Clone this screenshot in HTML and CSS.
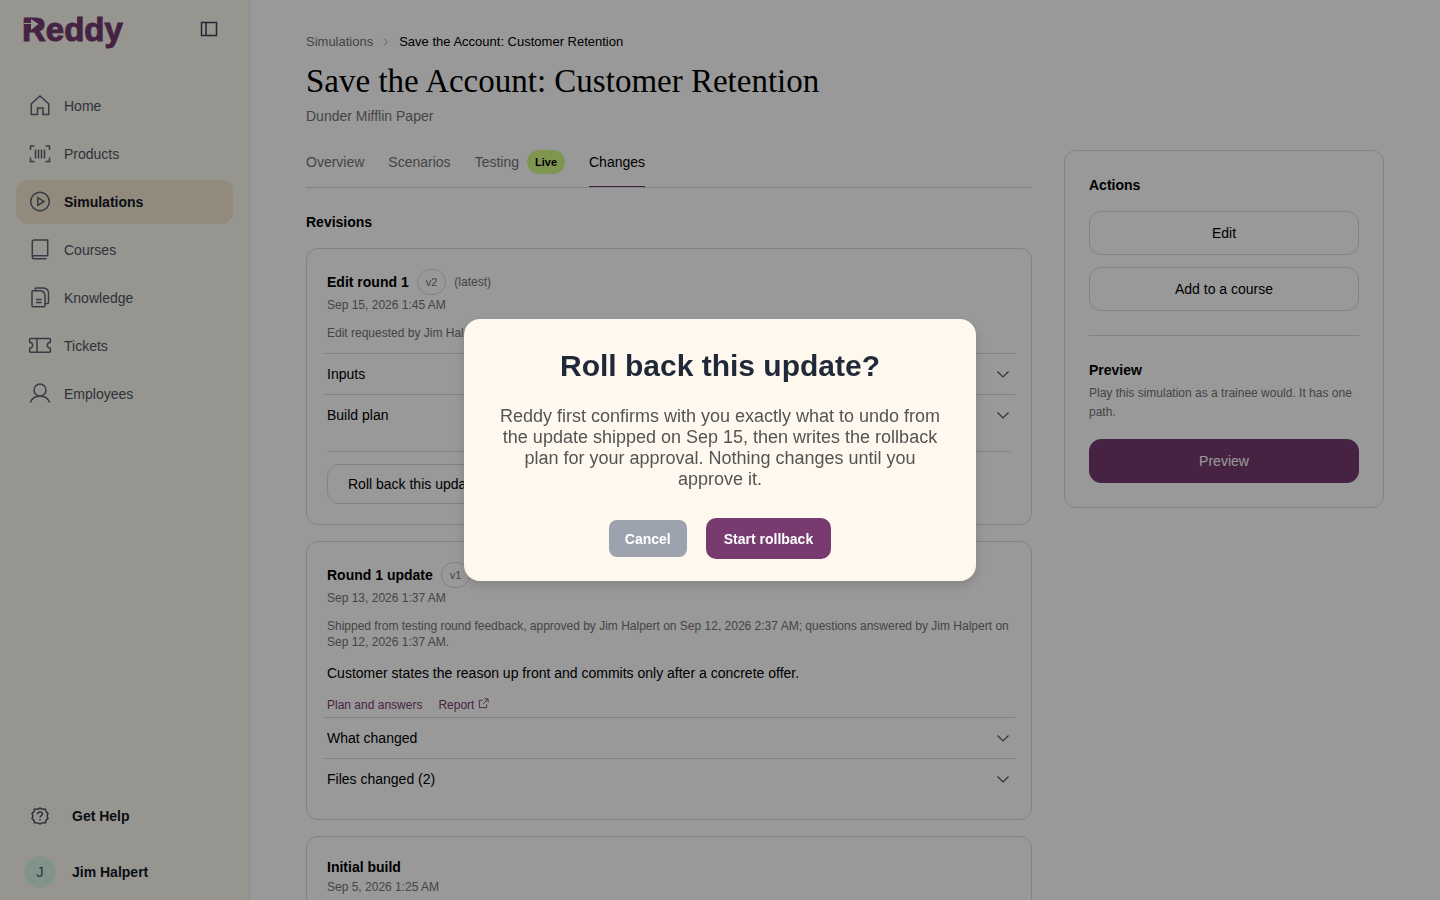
FILE: index.html
```
<!DOCTYPE html>
<html lang="en">
<head>
    <meta charset="UTF-8">
    <meta name="viewport" content="width=device-width, initial-scale=1.0">
    <title>Save the Account: Customer Retention - Reddy</title>
    <link rel="stylesheet" href="styles.css">
</head>
<body>

    <div class="app">
        <aside class="sidebar">
            <div class="sidebar-top">
                <a href="#" class="logo" aria-label="Reddy">
                    <svg width="110" height="44" viewBox="0 0 110 44">
                        <text class="logo-text" x="-2" y="29">Reddy</text>
                        <path class="logo-fill" d="M5 8h10v8H5z"/>
                        <path class="logo-cut" d="M0 11h7V7l7.500 5L7 18v-6H0z"/>
                    </svg>
                </a>
                <button class="collapse-btn" aria-label="Toggle sidebar">
                    <svg width="18" height="16" viewBox="0 0 18 16"><path d="M1.500 1.500h15v13h-15zM6 1.500v13"/></svg>
                </button>
            </div>

            <nav class="nav">
                <a href="#" class="nav-item">
                    <svg class="icon" viewBox="0 0 24 24"><path d="M3.300 9.800L12 2l8.700 7.800v10.700H15v-6.500H9.500v6.500H3.300z"/></svg>
                    Home
                </a>
                <a href="#" class="nav-item">
                    <svg class="icon" viewBox="0 0 24 24"><path d="M6.500 4h-4v4M17.500 4h4v4M6.500 19.500h-4v-4M17.500 19.500h4v-4M7.500 7.500v9M10.500 7.500v9M13.500 7.500v9M16.500 7.500v9"/></svg>
                    Products
                </a>
                <a href="#" class="nav-item active">
                    <svg class="icon" viewBox="0 0 24 24"><circle cx="12" cy="11.500" r="9.300"/><path d="M9.800 7.700v7.600l6.200-3.800z"/></svg>
                    Simulations
                </a>
                <a href="#" class="nav-item">
                    <svg class="icon" viewBox="0 0 24 24"><path d="M4.300 19v-15a2 2 0 0 1 2-2h13.400v15.700H5.800a1.500 1.500 0 0 0 0 3H18.500"/></svg>
                    Courses
                </a>
                <a href="#" class="nav-item">
                    <svg class="icon" viewBox="0 0 24 24"><path d="M4 5.700a1 1 0 0 1 1-1h7.500q4 .5 4.500 4.500v10.500a1 1 0 0 1-1 1H5a1 1 0 0 1-1-1zM7.300 4.500V3a1 1 0 0 1 1-1H15.500q4.500.5 5 4.500v10a1 1 0 0 1-1 1H17.200M8 13.500h5.500M8 16.500h5.500"/></svg>
                    Knowledge
                </a>
                <a href="#" class="nav-item">
                    <svg class="icon" viewBox="0 0 24 24"><path d="M2.500 4.500h19a.8.8 0 0 1 .8.8v3q-3 .7-3 3t3 3v3.200a.8.8 0 0 1-.8.800h-19a.8.8 0 0 1-.8-.800v-3.200q3-.7 3-3t-3-3v-3a.8.8 0 0 1 .8-.8zM9 4.500v13.800"/></svg>
                    Tickets
                </a>
                <a href="#" class="nav-item">
                    <svg class="icon" viewBox="0 0 24 24"><circle cx="12" cy="8" r="6"/><path d="M2.300 20.500c1.500-4 5-6.500 9.700-6.500s8.200 2.500 9.700 6.500"/></svg>
                    Employees
                </a>
            </nav>

            <div class="sidebar-bottom">
                <a href="#" class="bottom-item">
                    <span class="bottom-icon">
                        <svg width="18" height="18" viewBox="0 0 18 18"><path d="M9 1Q10.500 2.600 14.500 2.200Q14.300 4.800 17 6.500Q15.400 9 17 11.500Q14.300 13.200 14.500 15.800Q10.500 15.400 9 17Q7.500 15.400 3.500 15.800Q3.700 13.200 1 11.500Q2.600 9 1 6.500Q3.700 4.800 3.500 2.200Q7.500 2.600 9 1z"/><path d="M6.500 7.200c0-3 5-3 5-.2 0 1.700-2.500 1.700-2.500 3.500M9 12v1.500"/></svg>
                    </span>
                    Get Help
                </a>
                <a href="#" class="bottom-item">
                    <span class="avatar">J</span>
                    Jim Halpert
                </a>
            </div>
        </aside>

        <main class="main">
            <div class="breadcrumb">
                <a href="#">Simulations</a>
                <svg width="6" height="10" viewBox="0 0 6 10"><path d="M1 1.500L4.500 5 1 8.500"/></svg>
                <span>Save the Account: Customer Retention</span>
            </div>
            <h1>Save the Account: Customer Retention</h1>
            <p class="company">Dunder Mifflin Paper</p>

            <div class="columns">
                <div class="content">
                    <div class="tabs">
                        <a href="#" class="tab">Overview</a>
                        <a href="#" class="tab">Scenarios</a>
                        <a href="#" class="tab">Testing <span class="live">Live</span></a>
                        <a href="#" class="tab active">Changes</a>
                    </div>

                    <h2>Revisions</h2>

                    <div class="revisions">
                        <!-- Edit round 1 -->
                        <section class="card">
                            <div class="card-title">
                                <h3>Edit round 1</h3>
                                <span class="version">v2</span>
                                <span class="latest">(latest)</span>
                            </div>
                            <p class="date">Sep 15, 2026 1:45 AM</p>
                            <p class="note">Edit requested by Jim Halpert.</p>
                            <div class="rows">
                                <button class="row">Inputs <svg width="12" height="8" viewBox="0 0 12 8"><path d="M.5 1.500L6 7l5.500-5.500"/></svg></button>
                                <button class="row">Build plan <svg width="12" height="8" viewBox="0 0 12 8"><path d="M.5 1.500L6 7l5.500-5.500"/></svg></button>
                            </div>
                            <div class="card-footer">
                                <button class="btn btn-small">Roll back this update</button>
                            </div>
                        </section>

                        <!-- Round 1 update -->
                        <section class="card">
                            <div class="card-title">
                                <h3>Round 1 update</h3>
                                <span class="version">v1</span>
                            </div>
                            <p class="date">Sep 13, 2026 1:37 AM</p>
                            <p class="note">Shipped from testing round feedback, approved by Jim Halpert on Sep 12, 2026 2:37 AM; questions answered by Jim Halpert on Sep 12, 2026 1:37 AM.</p>
                            <p class="summary">Customer states the reason up front and commits only after a concrete offer.</p>
                            <div class="links">
                                <a href="#">Plan and answers</a>
                                <a href="#">Report <svg width="11" height="11" viewBox="0 0 12 12"><path d="M5 2.500H1.500v8h8V7M7 1h4v4M11 1L5.500 6.500"/></svg></a>
                            </div>
                            <div class="rows">
                                <button class="row">What changed <svg width="12" height="8" viewBox="0 0 12 8"><path d="M.5 1.500L6 7l5.500-5.500"/></svg></button>
                                <button class="row">Files changed (2) <svg width="12" height="8" viewBox="0 0 12 8"><path d="M.5 1.500L6 7l5.500-5.500"/></svg></button>
                            </div>
                        </section>

                        <!-- Initial build -->
                        <section class="card">
                            <div class="card-title">
                                <h3>Initial build</h3>
                            </div>
                            <p class="date">Sep 5, 2026 1:25 AM</p>
                        </section>
                    </div>
                </div>

                <aside class="panel">
                    <h2>Actions</h2>
                    <div class="panel-buttons">
                        <button class="btn">Edit</button>
                        <button class="btn">Add to a course</button>
                    </div>
                    <hr>
                    <h2>Preview</h2>
                    <p class="panel-text">Play this simulation as a trainee would. It has one path.</p>
                    <button class="btn btn-primary">Preview</button>
                </aside>
            </div>
        </main>
    </div>

    <div class="overlay">
        <div class="modal" role="dialog" aria-modal="true" aria-labelledby="modalTitle">
            <h2 class="modal-title" id="modalTitle">Roll back this update?</h2>
            <p class="modal-text">Reddy first confirms with you exactly what to undo from the update shipped on Sep 15, then writes the rollback plan for your approval. Nothing changes until you approve it.</p>
            <div class="modal-actions">
                <button class="modal-cancel">Cancel</button>
                <button class="modal-confirm">Start rollback</button>
            </div>
        </div>
    </div>

</body>
</html>
```

FILE: styles.css
```
* {
    box-sizing: border-box;
}
body {
    margin: 0;
    font-family: "Liberation Sans", Arial, sans-serif;
    font-size: 14px;
    line-height: 20px;
    color: #000;
    background-color: #fff;
    overflow: hidden;
}
h1, h2, h3, p {
    margin: 0;
}
h2, h3 {
    font-size: 14px;
    font-weight: bold;
}
a {
    color: inherit;
    text-decoration: none;
}
button {
    font: inherit;
    color: inherit;
    background: none;
    border: none;
    padding: 0;
    cursor: pointer;
}
svg {
    fill: none;
    stroke: currentColor;
    stroke-width: 1.5;
    flex-shrink: 0;
}
.app {
    display: flex;
    height: 100vh;
}

/* sidebar */
.sidebar {
    width: 250px;
    flex-shrink: 0;
    display: flex;
    flex-direction: column;
    background-color: #fbf8f1;
    border-right: 1px solid #e5e7eb;
}
.sidebar-top {
    display: flex;
    justify-content: space-between;
    align-items: flex-start;
    padding: 12px 31px 0 24px;
    height: 84px;
}
.logo svg {
    display: block;
    stroke: none;
    overflow: visible;
}
.logo-text {
    font-family: "Liberation Sans", Arial, sans-serif;
    font-size: 33px;
    font-weight: bold;
    fill: #773b70;
    stroke: #773b70;
    stroke-width: 1;
}
.logo-fill {
    fill: #773b70;
}
.logo-cut {
    fill: #fbf8f1;
}
.collapse-btn {
    display: flex;
    padding: 9px 0;
    color: #374151;
}
.nav {
    display: flex;
    flex-direction: column;
    gap: 4px;
    padding: 0 16px;
}
.nav-item {
    display: flex;
    align-items: center;
    gap: 12px;
    height: 44px;
    padding: 0 12px;
    border-radius: 12px;
    color: #4b5563;
}
.nav-item.active {
    background-color: #f3e6cf;
    color: #111827;
    font-weight: bold;
}
.icon {
    width: 24px;
    height: 24px;
    color: #5b6472;
}
.sidebar-bottom {
    display: flex;
    flex-direction: column;
    gap: 24px;
    margin-top: auto;
    padding: 0 24px 12px;
}
.bottom-item {
    display: flex;
    align-items: center;
    gap: 16px;
    height: 32px;
    color: #111827;
    font-weight: bold;
}
.bottom-icon,
.avatar {
    display: flex;
    align-items: center;
    justify-content: center;
    width: 32px;
    height: 32px;
    border-radius: 50%;
}
.bottom-icon {
    color: #4b5563;
}
.avatar {
    background-color: #d9f5ea;
    color: #3d6158;
    font-weight: normal;
}

/* main */
.main {
    flex: 1;
    padding: 32px 56px;
    overflow: hidden;
}
.breadcrumb {
    display: flex;
    align-items: center;
    gap: 10px;
    font-size: 13px;
}
.breadcrumb a,
.company {
    color: #737373;
}
.breadcrumb svg {
    color: #a3a3a3;
    stroke-width: 1;
}
h1 {
    margin-top: 9px;
    font-family: "Liberation Serif", "Times New Roman", serif;
    font-size: 33px;
    font-weight: normal;
    line-height: 40px;
}
.company {
    margin-top: 5px;
}
.columns {
    display: grid;
    grid-template-columns: 1fr 320px;
    gap: 32px;
    align-items: start;
    margin-top: 24px;
}
.tabs {
    display: flex;
    gap: 24px;
    border-bottom: 1px solid #d9d9d9;
}
.tab {
    display: flex;
    align-items: center;
    gap: 8px;
    height: 37px;
    padding-bottom: 12px;
    border-bottom: 1px solid transparent;
    color: #737373;
}
.tab.active {
    color: #000;
    border-bottom-color: #773b70;
}
.live {
    padding: 2px 8px;
    border-radius: 12px;
    background-color: #d4fa85;
    color: #000;
    font-size: 11px;
    font-weight: bold;
}
.content h2 {
    margin: 24px 0 16px;
}
.revisions {
    display: flex;
    flex-direction: column;
    gap: 16px;
}
.card {
    padding: 20px;
    border: 1px solid #d9d9d9;
    border-radius: 12px;
}
.card-title {
    display: flex;
    align-items: center;
    gap: 8px;
}
.version {
    padding: 2px 8px;
    border: 1px solid #d9d9d9;
    border-radius: 13px;
    color: #737373;
    font-size: 11px;
}
.latest,
.date,
.note {
    color: #737373;
    font-size: 12px;
    line-height: 16px;
}
.date {
    margin-top: 2px;
}
.note {
    margin: 12px 0;
}
.summary {
    margin-bottom: 10px;
    line-height: 23px;
}
.links {
    display: flex;
    gap: 16px;
    padding-bottom: 2px;
    color: #773b70;
    font-size: 12px;
}
.links svg {
    stroke-width: 1;
}
.rows {
    margin: 0 -4px;
}
.row {
    display: flex;
    align-items: center;
    justify-content: space-between;
    width: 100%;
    padding: 10px 6px 10px 4px;
    border-top: 1px solid #d9d9d9;
}
.row svg {
    color: #525252;
    stroke-width: 1.2;
}
.card-footer {
    margin-top: 16px;
    padding-top: 12px;
    border-top: 1px solid #d9d9d9;
}

/* buttons and side panel */
.btn {
    height: 44px;
    width: 100%;
    border: 1px solid #d9d9d9;
    border-radius: 12px;
}
.btn-small {
    width: auto;
    height: 40px;
    padding: 0 20px;
    display: block;
}
.btn-primary {
    border-color: #773b70;
    background-color: #773b70;
    color: #fff;
}
.panel {
    padding: 24px;
    border: 1px solid #d9d9d9;
    border-radius: 12px;
}
.panel-buttons {
    display: flex;
    flex-direction: column;
    gap: 12px;
    margin-top: 16px;
}
.panel hr {
    margin: 24px 0;
    border: none;
    border-top: 1px solid #d9d9d9;
}
.panel-text {
    margin: 4px 0 17px;
    color: #737373;
    font-size: 12px;
    line-height: 19px;
}

/* modal */
.overlay {
    position: fixed;
    inset: 0;
    display: flex;
    align-items: center;
    justify-content: center;
    background-color: rgba(0, 0, 0, 0.4);
}
.modal {
    width: 512px;
    padding: 29px 32px 22px;
    border-radius: 16px;
    background-color: #fff8ee;
    box-shadow: 0 4px 12px rgba(0, 0, 0, 0.15);
    text-align: center;
}
.modal-title {
    color: #1f2937;
    font-size: 30px;
    line-height: 36px;
}
.modal-text {
    margin: 22px 0 28px;
    color: #545454;
    font-size: 18px;
    line-height: 21px;
}
.modal-actions {
    display: flex;
    align-items: center;
    justify-content: center;
    gap: 19px;
}
.modal-cancel,
.modal-confirm {
    color: #fff;
    font-weight: bold;
}
.modal-cancel {
    height: 37px;
    padding: 0 16px;
    border-radius: 8px;
    background-color: #9ca3af;
}
.modal-confirm {
    height: 41px;
    padding: 0 18px;
    border-radius: 10px;
    background-color: #773b70;
}
```
